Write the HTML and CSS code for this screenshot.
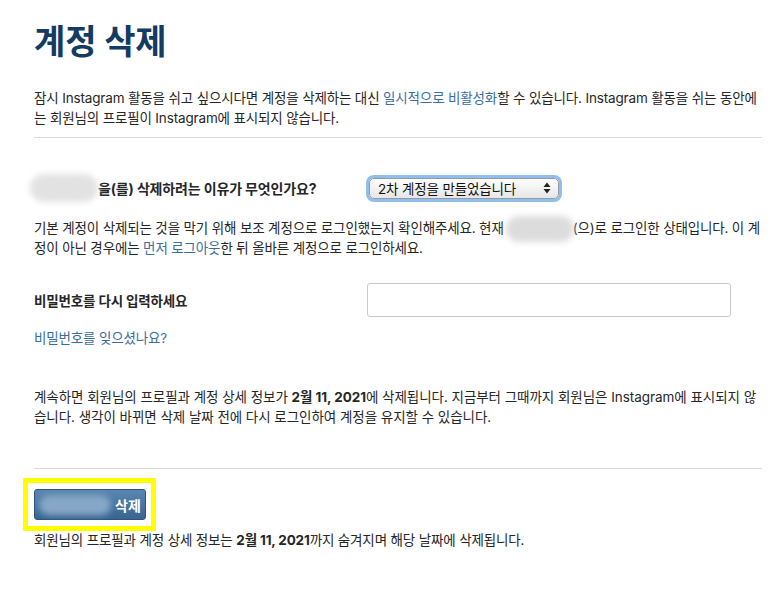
FILE: index.html
```html
<!DOCTYPE html>
<html lang="ko">
<head>
  <meta charset="UTF-8" />
  <title>계정 삭제</title>
  <link rel="stylesheet" href="styles.css">
</head>
<body>
  <div class="page">
    <h1>계정 삭제</h1>
    <p class="text">잠시 Instagram 활동을 쉬고 싶으시다면 계정을 삭제하는 대신 <a href="#">일시적으로 비활성화</a>할 수 있습니다. Instagram 활동을 쉬는 동안에는 회원님의 프로필이 Instagram에 표시되지 않습니다.</p>
    <hr class="rule">

    <!-- reason -->
    <div class="reason-row">
      <div class="question"><span class="blur name-blur"></span>을(를) 삭제하려는 이유가 무엇인가요?</div>
      <div class="select">
        <span>2차 계정을 만들었습니다</span>
        <svg class="arrows" width="8" height="12" viewBox="0 0 8 12"><path d="M4 0.5 L7.5 5 H0.5 Z M4 11.5 L7.5 7 H0.5 Z" fill="#222"/></svg>
      </div>
    </div>
    <p class="text note">기본 계정이 삭제되는 것을 막기 위해 보조 계정으로 로그인했는지 확인해주세요. 현재<span class="blur user-blur"></span>(으)로 로그인한 상태입니다. 이 계정이 아닌 경우에는 <a href="#">먼저 로그아웃</a>한 뒤 올바른 계정으로 로그인하세요.</p>

    <!-- password -->
    <div class="pw-row">
      <label for="pw">비밀번호를 다시 입력하세요</label>
      <input type="password" id="pw" class="pw-input">
    </div>
    <a class="forgot" href="#">비밀번호를 잊으셨나요?</a>

    <p class="text info">계속하면 회원님의 프로필과 계정 상세 정보가 <b>2월 11, 2021</b>에 삭제됩니다. 지금부터 그때까지 회원님은 Instagram에 표시되지 않습니다. 생각이 바뀌면 삭제 날짜 전에 다시 로그인하여 계정을 유지할 수 있습니다.</p>
    <hr class="rule bottom-rule">

    <div class="highlight">
      <button class="delete-btn"><span class="blur btn-blur"></span>삭제</button>
    </div>
    <p class="text final">회원님의 프로필과 계정 상세 정보는 <b>2월 11, 2021</b>까지 숨겨지며 해당 날짜에 삭제됩니다.</p>
  </div>
</body>
</html>
```

FILE: styles.css
```css
body {
  margin: 0;
  background-color: #fff;
  color: #262626;
  font-family: Inter, "Noto Sans CJK KR", sans-serif;
  font-size: 13.5px;
  letter-spacing: -0.15px;
}

.page {
  width: 728px;
  padding-left: 34px;
}

h1 {
  margin: 20px 0 0;
  font-size: 34px;
  line-height: 44px;
  font-weight: 700;
  color: #143b62;
}

a {
  color: #3b6e9c;
  text-decoration: none;
}

.text {
  margin: 24px 0 0;
  line-height: 20px;
}

.rule {
  margin: 9px 0 0;
  border: none;
  border-top: 1px solid #dbdbdb;
}

.blur {
  display: inline-block;
  background-color: #d4d4d4;
  border-radius: 14px;
  filter: blur(3px);
  vertical-align: middle;
}

.reason-row {
  display: flex;
  align-items: center;
  margin-top: 35px;
  height: 30px;
}

.question {
  width: 335px;
  font-size: 14px;
  font-weight: 700;
  display: flex;
  align-items: center;
}

.name-blur {
  width: 68px;
  height: 28px;
  margin-left: -4px;
  background-color: #e2e2e2;
}

.select {
  display: flex;
  align-items: center;
  justify-content: space-between;
  box-sizing: border-box;
  width: 190px;
  height: 21px;
  padding: 0 7px 0 8px;
  border: 1px solid #9a9a9a;
  border-radius: 5px;
  background: linear-gradient(#ffffff, #e6e6e6);
  box-shadow: 0 0 0 3px #8fbff0;
  font-size: 13.5px;
  color: #111;
}

.note {
  margin-top: 15px;
}

.user-blur {
  width: 68px;
  height: 26px;
  margin: -6px -1px -6px 2px;
  background-color: #dcdcdc;
}

.pw-row {
  display: flex;
  align-items: center;
  margin-top: 25px;
}

.pw-row label {
  width: 333px;
  font-size: 13.5px;
  font-weight: 700;
}

.pw-input {
  width: 364px;
  height: 34px;
  box-sizing: border-box;
  border: 1px solid #c9c9c9;
  border-radius: 3px;
}

.forgot {
  display: block;
  margin-top: 11px;
  line-height: 20px;
}

.info {
  margin-top: 39px;
  letter-spacing: -0.05px;
}

.bottom-rule {
  margin-top: 41px;
}

.highlight {
  display: inline-block;
  margin: 9px 0 0 -11px;
  padding: 6px 5px 6px 6px;
  border: 5px solid #ffff00;
}

.delete-btn {
  display: flex;
  align-items: center;
  width: 112px;
  height: 31px;
  padding: 0 0 0 4px;
  border: 1px solid #2d5479;
  border-radius: 3px;
  background: linear-gradient(#5a86b1, #386590);
  color: #fff;
  font-family: inherit;
  font-size: 14px;
  font-weight: 700;
}

.btn-blur {
  width: 72px;
  height: 20px;
  margin-right: 4px;
  background-color: #86a7c6;
}

.final {
  margin-top: -1px;
}
```
